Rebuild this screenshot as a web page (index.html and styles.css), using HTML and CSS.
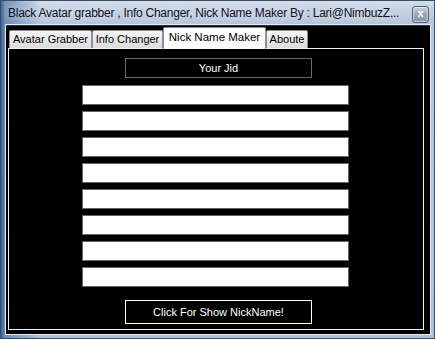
FILE: index.html
```html
<!DOCTYPE html>
<html>
<head>
<meta charset="utf-8">
<link rel="stylesheet" href="styles.css">
</head>
<body>
<div class="window">
  <div class="titlebar">
    <span class="title">Black Avatar grabber , Info Changer, Nick Name Maker By : Lari@NimbuzZ...</span>
    <span class="close">x</span>
  </div>
  <div class="client">
    <div class="tabs">
      <div class="tab t1">Avatar Grabber</div>
      <div class="tab t2">Info Changer</div>
      <div class="tab t3 active">Nick Name Maker</div>
      <div class="tab t4">Aboute</div>
    </div>
    <div class="panel">
      <div class="jid">Your Jid</div>
      <div class="fields">
        <div class="field"></div>
        <div class="field"></div>
        <div class="field"></div>
        <div class="field"></div>
        <div class="field"></div>
        <div class="field"></div>
        <div class="field"></div>
        <div class="field"></div>
      </div>
      <div class="btn">Click For Show NickName!</div>
    </div>
  </div>
</div>
</body>
</html>
```

FILE: styles.css
```css
html, body {
  margin: 0;
  padding: 0;
  width: 435px;
  height: 339px;
  overflow: hidden;
}
.window {
  box-sizing: border-box;
  width: 435px;
  height: 339px;
  border: 1px solid #3d4d61;
  background:
    linear-gradient(90deg, rgba(40,80,140,0.85) 0px, rgba(60,100,160,0.6) 4px, rgba(60,100,160,0) 40px),
    linear-gradient(180deg, #d3deeb 0px, #c2d0e2 10px, #b7c7db 22px, #b0c1d6 100%);
  display: flex;
  flex-direction: column;
  font-family: "Liberation Sans", Arial, sans-serif;
}
.titlebar {
  height: 24px;
  display: flex;
  align-items: flex-start;
  position: relative;
}
.title {
  font-family: "Liberation Sans", Arial, sans-serif;
  font-size: 12px;
  letter-spacing: -0.25px;
  color: #0f0f1a;
  margin-left: 7px;
  margin-top: 5px;
  white-space: nowrap;
  text-shadow: 0 0 6px rgba(255,255,255,0.7);
}
.close {
  position: absolute;
  left: 411px;
  top: 5px;
  width: 15px;
  height: 15px;
  border: 1px solid #4f5d6e;
  border-radius: 3px;
  background: linear-gradient(180deg, #c9d1db 0%, #9aa6b5 50%, #8894a4 100%);
  color: #fff;
  font-size: 11px;
  font-weight: bold;
  line-height: 13px;
  text-align: center;
  box-shadow: inset 0 0 0 1px rgba(255,255,255,0.5);
}
.client {
  margin-left: 5px;
  width: 424px;
  height: 308px;
  background: #000;
  border-top: 1px solid #2a3340;
  box-shadow: 0 0 0 1px #e4ebf4;
  display: flex;
  flex-direction: column;
}
.tabs {
  display: flex;
  align-items: flex-end;
  height: 22px;
  margin-left: 3px;
  position: relative;
  z-index: 2;
}
.tab {
  box-sizing: border-box;
  height: 18px;
  border: 1px solid #8a8f98;
  border-bottom: none;
  border-radius: 2px 2px 0 0;
  background: linear-gradient(180deg, #f4f4f4 0%, #e9e9e9 50%, #dcdcdc 100%);
  font-size: 11px;
  line-height: 17px;
  color: #000;
  text-align: center;
  white-space: nowrap;
}
.t1 { width: 83px; }
.t2 { width: 71px; }
.t3 { width: 103px; }
.t4 { width: 42px; }
.tab.active {
  height: 22px;
  margin-bottom: -1px;
  background: #fff;
  line-height: 19px;
  font-size: 11.5px;
}
.panel {
  box-sizing: border-box;
  margin-left: 2px;
  width: 416px;
  height: 282px;
  border: 1px solid #f2f2f2;
  display: flex;
  flex-direction: column;
  align-items: flex-start;
}
.jid {
  box-sizing: border-box;
  margin-left: 116px;
  margin-top: 9px;
  width: 187px;
  height: 20px;
  border: 1px solid #666;
  color: #fff;
  font-size: 11px;
  line-height: 18px;
  text-align: center;
}
.fields {
  margin-left: 73px;
  margin-top: 7px;
  display: flex;
  flex-direction: column;
  gap: 6px;
}
.field {
  box-sizing: border-box;
  width: 267px;
  height: 20px;
  background: #fff;
  border: 1px solid #646464;
}
.btn {
  box-sizing: border-box;
  margin-left: 116px;
  margin-top: 13px;
  width: 187px;
  height: 24px;
  border: 1px solid #fff;
  color: #fff;
  font-size: 11px;
  line-height: 22px;
  text-align: center;
}
```
